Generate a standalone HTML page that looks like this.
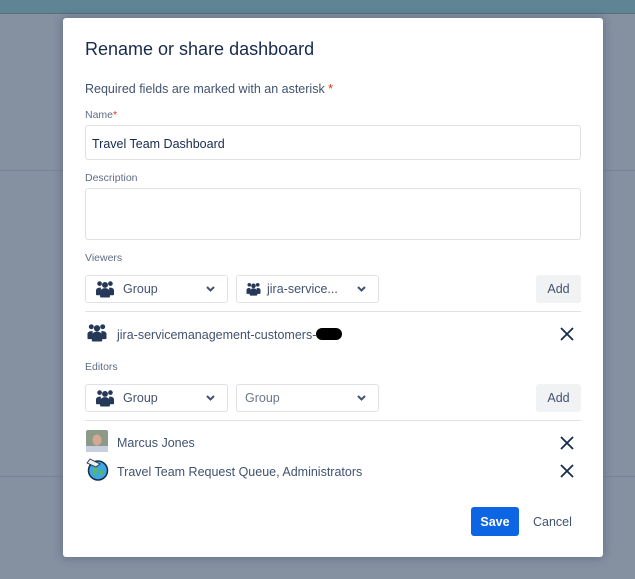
<!DOCTYPE html>
<html><head><meta charset="utf-8"><style>
*{box-sizing:border-box;margin:0;padding:0}
body{width:635px;height:579px;overflow:hidden;background:#8590a0;font-family:"Liberation Sans",sans-serif;color:#172b4d;position:relative}
.a{position:absolute}
.top{left:0;top:0;width:635px;height:14px;background:#5f8494;border-bottom:1px solid #56707e}
.bl{left:0;width:635px;height:1px;background:#7a8496}
.modal{left:63px;top:18px;width:540px;height:539px;background:#fff;border-radius:3px;box-shadow:0 0 10px rgba(9,30,66,.3)}
.lbl{font-size:10.5px;color:#5e6c84;left:85px}
.inp{left:85px;width:496px;border:1px solid #dfe1e6;border-radius:3px;background:#fff}
.sel{height:28px;border:1px solid #dfe1e6;border-radius:3px;background:#fff;font-size:12.5px;color:#42526e;display:flex;align-items:center}
.chev{position:absolute;right:12px;top:10px}
.btn{background:#f1f2f4;border-radius:3px;width:45px;height:28px;font-size:12.5px;color:#42526e;display:flex;align-items:center;justify-content:center}
.hr{left:85px;width:496px;height:1px;background:#dfe1e6}
.t{font-size:12.5px;color:#42526e}
.x{left:560px}
</style></head><body>
<div class="a top"></div>
<div class="a bl" style="top:170px"></div>
<div class="a bl" style="top:476px"></div>
<div class="a modal"></div>

<div class="a" style="left:85px;top:39px;font-size:18px;color:#172b4d">Rename or share dashboard</div>
<div class="a t" style="left:85px;top:82px">Required fields are marked with an asterisk <span style="color:#de350b">*</span></div>
<div class="a lbl" style="top:109px">Name<span style="color:#de350b">*</span></div>
<div class="a inp" style="top:125px;height:35px;font-size:12.5px;padding:11px 6px;color:#172b4d">Travel Team Dashboard</div>
<div class="a lbl" style="top:172px">Description</div>
<div class="a inp" style="top:188px;height:52px"></div>
<div class="a lbl" style="top:252px">Viewers</div>

<svg width="0" height="0" style="position:absolute"><defs>
<g id="grp"><circle cx="4" cy="4" r="2.6"/><circle cx="16" cy="4" r="2.6"/><circle cx="10" cy="5.5" r="3.3"/><path d="M0 12a4 3 0 0 1 4-3.5h1.5L5 17H1a1 1 0 0 1-1-1z"/><path d="M20 12a4 3 0 0 0-4-3.5h-1.5L15 17h4a1 1 0 0 0 1-1z"/><path d="M4.5 13.5a5.5 4.5 0 0 1 11 0V18a1.5 1.5 0 0 1-1.5 1.5H6A1.5 1.5 0 0 1 4.5 18z"/></g>
<path id="chv" d="M1 1l3.5 3.5L8 1" fill="none" stroke="#42526e" stroke-width="2"/>
<path id="xx" d="M1 1l12 12M13 1L1 13" stroke="#172b4d" stroke-width="1.8"/>
</defs></svg>

<div class="a sel" style="left:85px;top:275px;width:143px"><svg width="20" height="18" viewBox="0 0 20 20" style="margin-left:9px;fill:#253858"><use href="#grp"/></svg><span style="margin-left:8px">Group</span><svg class="chev" width="9" height="7"><use href="#chv"/></svg></div>
<div class="a sel" style="left:236px;top:275px;width:143px"><svg width="15" height="14" viewBox="0 0 20 20" style="margin-left:9px;fill:#253858"><use href="#grp"/></svg><span style="margin-left:6px">jira-service...</span><svg class="chev" width="9" height="7"><use href="#chv"/></svg></div>
<div class="a btn" style="left:536px;top:275px">Add</div>
<div class="a hr" style="top:311px"></div>

<svg class="a" style="left:87px;top:323px;fill:#253858" width="20" height="19" viewBox="0 0 20 20"><use href="#grp"/></svg>
<div class="a t" style="left:117px;top:328px">jira-servicemanagement-customers-</div>
<div class="a" style="left:316px;top:328px;width:26px;height:12px;background:#000;border-radius:6px"></div>
<svg class="a x" style="top:327px" width="14" height="14"><use href="#xx"/></svg>

<div class="a lbl" style="top:361px">Editors</div>
<div class="a sel" style="left:85px;top:384px;width:143px"><svg width="20" height="18" viewBox="0 0 20 20" style="margin-left:9px;fill:#253858"><use href="#grp"/></svg><span style="margin-left:8px">Group</span><svg class="chev" width="9" height="7"><use href="#chv"/></svg></div>
<div class="a sel" style="left:236px;top:384px;width:143px"><span style="margin-left:8px;color:#6b778c">Group</span><svg class="chev" width="9" height="7"><use href="#chv"/></svg></div>
<div class="a btn" style="left:536px;top:384px">Add</div>
<div class="a hr" style="top:420px"></div>

<svg class="a" style="left:86px;top:430px" width="22" height="22"><rect width="22" height="22" rx="2" fill="#8c9a8a"/><rect y="16" width="22" height="6" fill="#c8d0e0"/><ellipse cx="11" cy="10" rx="4.5" ry="5.5" fill="#d7a890"/></svg>
<div class="a t" style="left:117px;top:436px">Marcus Jones</div>
<svg class="a x" style="top:436px" width="14" height="14"><use href="#xx"/></svg>

<svg class="a" style="left:86px;top:458px" width="23" height="23"><circle cx="12" cy="12.5" r="9.5" fill="#3fa7e0" stroke="#172b4d" stroke-width="1.5"/><path d="M7 10c3-2 5 1 4 4s-3 4-4 2zM14 12c3 0 4 2 2 5-2 1-3-2-2-5z" fill="#5cb85c"/><path d="M1 5l9 4 4-3-10-5z" fill="#eee" stroke="#172b4d" stroke-width=".8"/></svg>
<div class="a t" style="left:117px;top:465px">Travel Team Request Queue, Administrators</div>
<svg class="a x" style="top:464px" width="14" height="14"><use href="#xx"/></svg>

<div class="a" style="left:471px;top:507px;width:48px;height:29px;background:#0c66e4;border-radius:3px;color:#fff;font-size:12.5px;font-weight:bold;display:flex;align-items:center;justify-content:center">Save</div>
<div class="a t" style="left:533px;top:515px">Cancel</div>
</body></html>
